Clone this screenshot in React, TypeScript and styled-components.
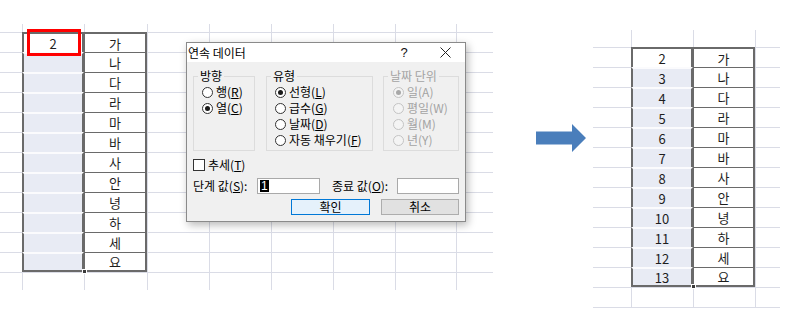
import React from 'react';
import styled, { createGlobalStyle } from 'styled-components';

const FONT = `"Noto Sans CJK KR", "Noto Sans", sans-serif`;
const GRID = '#dadce6';
const DARK = '#6a6a6a';
const SEL = '#e8ebf4';

const GlobalStyle = createGlobalStyle`
  html, body { margin: 0; padding: 0; background: #ffffff; }
  body { font-family: ${FONT}; color: #000; }
  *, *::before, *::after { box-sizing: border-box; }
`;

const Page = styled.div`
  position: relative;
  width: 801px;
  height: 329px;
  display: flex;
  align-items: flex-start;
  overflow: hidden;
  background: #fff;
`;

/* ---------- spreadsheet ---------- */

const Sheet = styled.div<{ $cols: string; $rows: string; $top: number; $left: number }>`
  flex: none;
  display: grid;
  grid-template-columns: ${(p) => p.$cols};
  grid-template-rows: ${(p) => p.$rows};
  margin-top: ${(p) => p.$top}px;
  margin-left: ${(p) => p.$left}px;
`;

const GridCell = styled.div<{ $l: boolean; $t: boolean }>`
  border-left: ${(p) => (p.$l ? `1px solid ${GRID}` : 'none')};
  border-top: ${(p) => (p.$t ? `1px solid ${GRID}` : 'none')};
`;

const CellText = styled.div`
  display: flex;
  align-items: center;
  justify-content: center;
  font-family: ${FONT};
  font-size: 13px;
  line-height: 1;
  color: #1e1e1e;
`;

const ValueCell = styled(CellText)<{ $first: boolean; $last: boolean }>`
  position: relative;
  z-index: ${(p) => (p.$first ? 3 : 1)};
  background: ${(p) => (p.$first ? '#ffffff' : SEL)};
  border-left: 2px solid ${DARK};
  border-right: 2px solid ${DARK};
  border-top: ${(p) => (p.$first ? `2px solid ${DARK}` : '2px solid #fbfbfd')};
  border-bottom: ${(p) => (p.$last ? `2px solid ${DARK}` : 'none')};
`;

const TextCell = styled(CellText)<{ $first: boolean; $last: boolean }>`
  background: #ffffff;
  border-left: 1px solid ${DARK};
  border-right: 2px solid ${DARK};
  border-top: ${(p) => (p.$first ? `2px solid ${DARK}` : `1px solid ${DARK}`)};
  border-bottom: ${(p) => (p.$last ? `2px solid ${DARK}` : 'none')};
`;

const FillHandle = styled.span`
  position: absolute;
  right: -5px;
  bottom: -4px;
  width: 5px;
  height: 5px;
  background: #3a3a3a;
  border: 1px solid #ffffff;
`;

const RedBox = styled.span`
  position: absolute;
  left: 3px;
  top: -5px;
  width: 54px;
  height: 27px;
  border: 3px solid #ff0000;
`;

type SpreadsheetProps = {
  cols: number[];
  rows: number[];
  top: number;
  left: number;
  values: string[];
  texts: string[];
  highlightFirst?: boolean;
};

function Spreadsheet({ cols, rows, top, left, values, texts, highlightFirst }: SpreadsheetProps) {
  const cells: React.ReactNode[] = [];
  const dataRow = 1;
  const dataCol = 1;
  rows.forEach((_, r) => {
    cols.forEach((__, c) => {
      const i = r - dataRow;
      const inData = i >= 0 && i < texts.length;
      const key = `${r}-${c}`;
      const first = i === 0;
      const last = i === texts.length - 1;
      if (inData && c === dataCol) {
        cells.push(
          <ValueCell key={key} $first={first} $last={last}>
            {values[i]}
            {first && highlightFirst && <RedBox />}
            {last && <FillHandle />}
          </ValueCell>
        );
      } else if (inData && c === dataCol + 1) {
        cells.push(
          <TextCell key={key} $first={first} $last={last}>
            {texts[i]}
          </TextCell>
        );
      } else {
        cells.push(<GridCell key={key} $l={c > 0} $t={r > 0} />);
      }
    });
  });
  return (
    <Sheet
      $cols={cols.map((w) => `${w}px`).join(' ')}
      $rows={rows.map((h) => `${h}px`).join(' ')}
      $top={top}
      $left={left}
    >
      {cells}
    </Sheet>
  );
}

/* ---------- arrow ---------- */

const ArrowSvg = styled.svg`
  flex: none;
  display: block;
  margin-left: 43px;
  margin-top: 124px;
`;

/* ---------- dialog ---------- */

const Dialog = styled.div`
  position: absolute;
  z-index: 5;
  left: 186px;
  top: 42px;
  width: 280px;
  border: 1px solid #8a8a8a;
  background: #f0f0f0;
  box-shadow: 2px 3px 8px rgba(0, 0, 0, 0.28);
  font-family: ${FONT};
  font-size: 12px;
  color: #000;
`;

const TitleBar = styled.div`
  height: 19px;
  display: flex;
  align-items: center;
  background: #ffffff;
  padding-left: 1px;
`;

const Title = styled.div`
  flex: 1;
  font-size: 12px;
  line-height: 19px;
`;

const HelpMark = styled.div`
  width: 14px;
  text-align: center;
  font-family: "Liberation Sans", sans-serif;
  font-size: 13px;
  line-height: 19px;
  color: #111;
`;

const CloseButton = styled.div`
  width: 30px;
  height: 19px;
  margin-left: 19px;
  margin-right: 5px;
  display: flex;
  align-items: center;
  justify-content: center;
`;

const Body = styled.div`
  padding: 7px 6px 6px 6px;
  display: flex;
  flex-direction: column;
`;

const GroupRow = styled.div`
  height: 82px;
  display: flex;
  align-items: stretch;
`;

const Group = styled.fieldset<{ $w: number; $gap: number }>`
  width: ${(p) => p.$w}px;
  margin: 0 0 0 ${(p) => p.$gap}px;
  padding: 0;
  min-width: 0;
  border: 1px solid #dcdcdc;
`;

const Legend = styled.legend<{ $disabled?: boolean }>`
  margin-left: 4px;
  padding: 0 2px;
  font-size: 12px;
  line-height: 14px;
  color: ${(p) => (p.$disabled ? '#a3a3a3' : '#000')};
`;

const OptionList = styled.div<{ $pad: number }>`
  padding: 1px 0 0 ${(p) => p.$pad}px;
  display: flex;
  flex-direction: column;
`;

const Option = styled.div<{ $disabled?: boolean }>`
  height: 16px;
  display: flex;
  align-items: center;
  gap: 3px;
  white-space: nowrap;
  font-size: 12px;
  line-height: 16px;
  color: ${(p) => (p.$disabled ? '#a3a3a3' : '#000')};
`;

const RadioCircle = styled.span<{ $checked?: boolean; $disabled?: boolean }>`
  flex: none;
  width: 11px;
  height: 11px;
  border-radius: 50%;
  border: 1px solid ${(p) => (p.$disabled ? '#c4c4c4' : '#333333')};
  background: ${(p) => (p.$disabled ? '#f4f4f4' : '#ffffff')};
  display: grid;
  place-items: center;
  &::after {
    content: '';
    display: ${(p) => (p.$checked ? 'block' : 'none')};
    width: 5px;
    height: 5px;
    border-radius: 50%;
    background: ${(p) => (p.$disabled ? '#a8a8a8' : '#1a1a1a')};
  }
`;

const CheckBox = styled.span`
  flex: none;
  width: 12px;
  height: 12px;
  border: 1px solid #333333;
  background: #ffffff;
`;

const Key = styled.span`
  text-decoration: underline;
  text-underline-offset: 1px;
`;

const CheckRow = styled(Option)`
  margin-top: 6px;
`;

const FieldRow = styled.div`
  margin-top: 5px;
  height: 16px;
  display: flex;
  align-items: center;
`;

const FieldLabel = styled.span<{ $w: number; $gap?: number }>`
  width: ${(p) => p.$w}px;
  margin-left: ${(p) => p.$gap ?? 0}px;
  font-size: 12px;
  line-height: 16px;
  white-space: nowrap;
`;

const TextBox = styled.div<{ $w: number }>`
  width: ${(p) => p.$w}px;
  height: 16px;
  border: 1px solid #a9a9a9;
  background: #ffffff;
  display: flex;
  align-items: center;
  padding-left: 2px;
`;

const SelectedText = styled.span`
  background: #000;
  color: #fff;
  font-family: "Liberation Sans", sans-serif;
  font-size: 12px;
  line-height: 12px;
  padding: 0 1px;
`;

const ButtonRow = styled.div`
  margin-top: 5px;
  display: flex;
  justify-content: flex-end;
  gap: 11px;
`;

const Button = styled.div<{ $w: number; $primary?: boolean }>`
  width: ${(p) => p.$w}px;
  height: 16px;
  display: flex;
  align-items: center;
  justify-content: center;
  font-size: 12px;
  line-height: 14px;
  background: ${(p) => (p.$primary ? '#e5f1fb' : '#e1e1e1')};
  border: 1px solid ${(p) => (p.$primary ? '#0078d7' : '#adadad')};
`;

type Opt = { label: string; key: string; checked?: boolean; underline?: boolean };

function OptionGroup({
  title,
  w,
  gap,
  pad,
  options,
  disabled,
}: {
  title: string;
  w: number;
  gap: number;
  pad: number;
  options: Opt[];
  disabled?: boolean;
}) {
  return (
    <Group $w={w} $gap={gap}>
      <Legend $disabled={disabled}>{title}</Legend>
      <OptionList $pad={pad}>
        {options.map((o) => (
          <Option key={o.label} $disabled={disabled}>
            <RadioCircle $checked={o.checked} $disabled={disabled} />
            <span>
              {o.label}(
              {o.underline === false ? o.key : <Key>{o.key}</Key>})
            </span>
          </Option>
        ))}
      </OptionList>
    </Group>
  );
}

function SeriesDialog() {
  return (
    <Dialog>
      <TitleBar>
        <Title>연속 데이터</Title>
        <HelpMark>?</HelpMark>
        <CloseButton>
          <svg width="11" height="11" viewBox="0 0 11 11">
            <path d="M0.5 0.5 L10.5 10.5 M10.5 0.5 L0.5 10.5" stroke="#222" strokeWidth="1" />
          </svg>
        </CloseButton>
      </TitleBar>
      <Body>
        <GroupRow>
          <OptionGroup
            title="방향"
            w={62}
            gap={0}
            pad={8}
            options={[
              { label: '행', key: 'R' },
              { label: '열', key: 'C', checked: true },
            ]}
          />
          <OptionGroup
            title="유형"
            w={107}
            gap={11}
            pad={8}
            options={[
              { label: '선형', key: 'L', checked: true },
              { label: '급수', key: 'G' },
              { label: '날짜', key: 'D' },
              { label: '자동 채우기', key: 'F' },
            ]}
          />
          <OptionGroup
            title="날짜 단위"
            w={76}
            gap={10}
            pad={9}
            disabled
            options={[
              { label: '일', key: 'A', checked: true, underline: false },
              { label: '평일', key: 'W', underline: false },
              { label: '월', key: 'M', underline: false },
              { label: '년', key: 'Y', underline: false },
            ]}
          />
        </GroupRow>
        <CheckRow>
          <CheckBox />
          <span>
            추세(<Key>T</Key>)
          </span>
        </CheckRow>
        <FieldRow>
          <FieldLabel $w={64}>
            단계 값(<Key>S</Key>):
          </FieldLabel>
          <TextBox $w={63}>
            <SelectedText>1</SelectedText>
          </TextBox>
          <FieldLabel $w={65} $gap={12}>
            종료 값(<Key>O</Key>):
          </FieldLabel>
          <TextBox $w={62} />
        </FieldRow>
        <ButtonRow>
          <Button $w={79} $primary>
            확인
          </Button>
          <Button $w={78}>취소</Button>
        </ButtonRow>
      </Body>
    </Dialog>
  );
}

const TEXTS = ['가', '나', '다', '라', '마', '바', '사', '안', '녕', '하', '세', '요'];

export default function App() {
  const leftValues = ['2', '', '', '', '', '', '', '', '', '', '', ''];
  const rightValues = TEXTS.map((_, i) => String(i + 2));
  return (
    <>
      <GlobalStyle />
      <Page>
        <Spreadsheet
          cols={[22, 62, 63, 62, 62, 62, 62, 61, 37]}
          rows={[8, ...Array(12).fill(20), 18]}
          top={24}
          left={0}
          values={leftValues}
          texts={TEXTS}
          highlightFirst
        />
        <ArrowSvg width="50" height="28" viewBox="0 0 50 28">
          <polygon points="0,7.5 36,7.5 36,0 50,14 36,28 36,20.5 0,20.5" fill="#4a7ebb" />
        </ArrowSvg>
        <Spreadsheet
          cols={[38, 62, 62, 25]}
          rows={[17, ...Array(12).fill(20), 20, 1]}
          top={30}
          left={7}
          values={rightValues}
          texts={TEXTS}
        />
        <SeriesDialog />
      </Page>
    </>
  );
}
